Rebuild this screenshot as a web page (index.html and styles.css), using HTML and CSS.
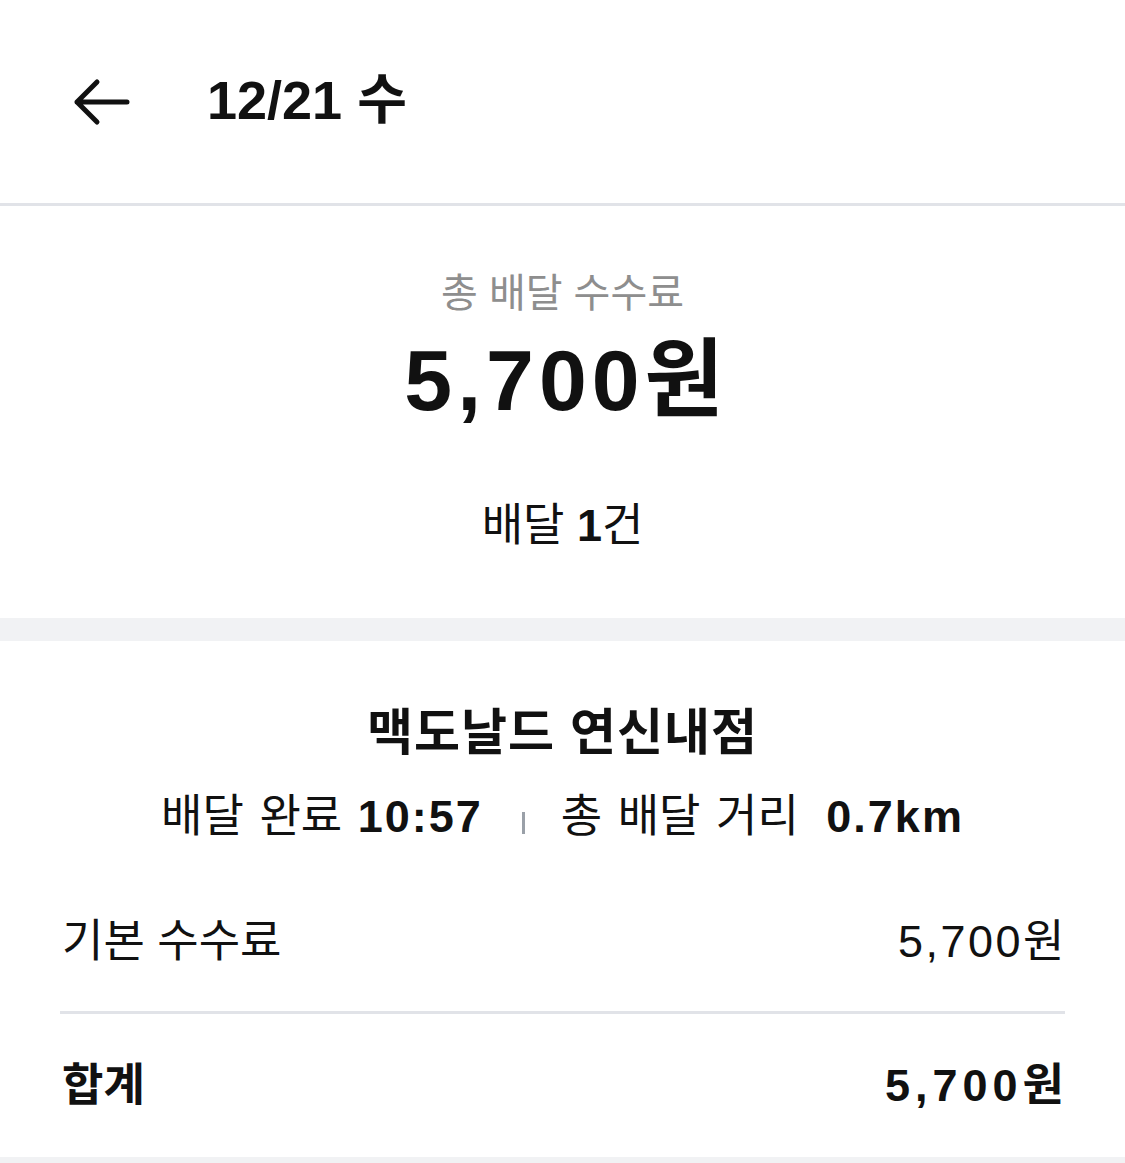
FILE: index.html
```html
<!DOCTYPE html>
<html lang="ko">
<head>
  <meta charset="UTF-8" />
  <title>12/21 수 배달 내역</title>
  <link rel="stylesheet" href="styles.css">
</head>
<body>
  <header class="topbar">
    <button class="back" type="button" aria-label="뒤로">
      <svg width="58" height="48" viewBox="0 0 58 48">
        <path d="M54 24H4M24 4L4 24L24 44" fill="none" stroke="#111" stroke-width="5" stroke-linecap="round" stroke-linejoin="round"/>
      </svg>
    </button>
    <h1 class="title">12/21 수</h1>
  </header>

  <section class="summary">
    <div class="summary-label">총 배달 수수료</div>
    <div class="summary-amount">5,700원</div>
    <div class="summary-count">배달 <b>1</b>건</div>
  </section>

  <div class="band"></div>

  <section class="store">
    <h2 class="store-name">맥도날드 연신내점</h2>
    <div class="store-meta">
      배달 완료 <b>10:57</b>
      <span class="sep"></span>
      총 배달 거리 <b class="dist">0.7km</b>
    </div>

    <div class="row">
      <span>기본 수수료</span>
      <span class="num">5,700원</span>
    </div>
    <div class="row total">
      <span>합계</span>
      <span class="num">5,700원</span>
    </div>
  </section>

  <div class="band bottom"></div>
</body>
</html>
```

FILE: styles.css
```css
body {
  margin: 0;
  background: #fff;
  color: #111;
  font-family: "Liberation Sans", "Noto Sans CJK KR", sans-serif;
}
b {
  font-weight: bold;
}
.topbar {
  height: 203px;
  display: flex;
  align-items: center;
  padding-left: 73px;
  border-bottom: 3px solid #e1e3e8;
}
.back {
  border: none;
  background: none;
  padding: 0;
  display: flex;
}
.title {
  margin: 0 0 4px 76px;
  font-size: 54px;
  font-weight: bold;
  line-height: 64px;
}
.summary {
  padding: 62px 0 0;
  height: 412px;
  box-sizing: border-box;
  text-align: center;
}
.summary-label {
  color: #8e8e8e;
  font-size: 40px;
  line-height: 50px;
}
.summary-amount {
  margin-top: 12px;
  margin-left: 8px;
  font-size: 86px;
  font-weight: bold;
  line-height: 100px;
  letter-spacing: 5px;
}
.summary-count {
  margin-top: 68px;
  font-size: 45px;
  line-height: 56px;
}
.band {
  height: 23px;
  background: #f1f2f4;
}
.band.bottom {
  height: 6px;
}
.store {
  padding: 62px 60px 0;
}
.store-name {
  margin: 0;
  text-align: center;
  font-size: 50px;
  line-height: 60px;
  letter-spacing: 1px;
}
.store-meta {
  margin-top: 26px;
  text-align: center;
  font-size: 45px;
  line-height: 56px;
  word-spacing: 3px;
}
.store-meta b {
  letter-spacing: 2px;
}
.store-meta .dist {
  margin-left: 12px;
}
.sep {
  display: inline-block;
  width: 3px;
  height: 22px;
  margin: 0 20px 0 24px;
  background: #9aa0a8;
  vertical-align: -2px;
}
.row {
  display: flex;
  justify-content: space-between;
  align-items: center;
  height: 148px;
  margin-top: 18px;
  padding: 0 0 0 2px;
  font-size: 45px;
  border-bottom: 3px solid #e1e3e8;
}
.row .num {
  letter-spacing: 2.5px;
  margin-right: -2px;
}
.row.total {
  margin-top: 0;
  height: 135px;
  padding-bottom: 8px;
  border-bottom: none;
  font-weight: bold;
}
.row.total .num {
  letter-spacing: 5px;
  margin-right: -4px;
}
```
